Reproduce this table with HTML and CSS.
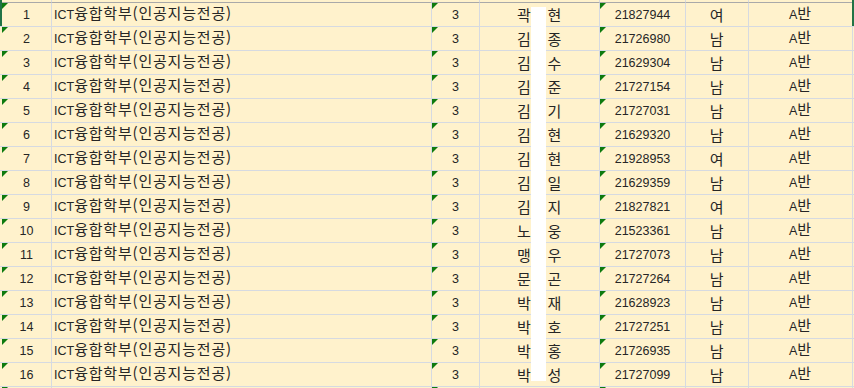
FILE: index.html
```html
<!DOCTYPE html>
<html lang="ko">
<head>
<meta charset="utf-8">
<link rel="stylesheet" href="styles.css">
</head>
<body>
<div class="sheet">
  <div class="row top">
    <div class="edge"></div><div class="c"></div><div class="c"></div><div class="c"></div><div class="c"></div><div class="c"></div><div class="c"></div><div class="c"></div><div class="rest"></div>
  </div>
  <div class="row"><div class="edge"></div><div class="c num tri">1</div><div class="c dept">ICT<span class="k">융합학부(인공지능전공)</span></div><div class="c ctr tri">3</div><div class="c ctr k">곽　현</div><div class="c ctr tri">21827944</div><div class="c ctr k">여</div><div class="c ctr">A<span class="k">반</span></div><div class="rest"></div></div>
  <div class="row"><div class="edge"></div><div class="c num tri">2</div><div class="c dept">ICT<span class="k">융합학부(인공지능전공)</span></div><div class="c ctr tri">3</div><div class="c ctr k">김　종</div><div class="c ctr tri">21726980</div><div class="c ctr k">남</div><div class="c ctr">A<span class="k">반</span></div><div class="rest"></div></div>
  <div class="row"><div class="edge"></div><div class="c num tri">3</div><div class="c dept">ICT<span class="k">융합학부(인공지능전공)</span></div><div class="c ctr tri">3</div><div class="c ctr k">김　수</div><div class="c ctr tri">21629304</div><div class="c ctr k">남</div><div class="c ctr">A<span class="k">반</span></div><div class="rest"></div></div>
  <div class="row"><div class="edge"></div><div class="c num tri">4</div><div class="c dept">ICT<span class="k">융합학부(인공지능전공)</span></div><div class="c ctr tri">3</div><div class="c ctr k">김　준</div><div class="c ctr tri">21727154</div><div class="c ctr k">남</div><div class="c ctr">A<span class="k">반</span></div><div class="rest"></div></div>
  <div class="row"><div class="edge"></div><div class="c num tri">5</div><div class="c dept">ICT<span class="k">융합학부(인공지능전공)</span></div><div class="c ctr tri">3</div><div class="c ctr k">김　기</div><div class="c ctr tri">21727031</div><div class="c ctr k">남</div><div class="c ctr">A<span class="k">반</span></div><div class="rest"></div></div>
  <div class="row"><div class="edge"></div><div class="c num tri">6</div><div class="c dept">ICT<span class="k">융합학부(인공지능전공)</span></div><div class="c ctr tri">3</div><div class="c ctr k">김　현</div><div class="c ctr tri">21629320</div><div class="c ctr k">남</div><div class="c ctr">A<span class="k">반</span></div><div class="rest"></div></div>
  <div class="row"><div class="edge"></div><div class="c num tri">7</div><div class="c dept">ICT<span class="k">융합학부(인공지능전공)</span></div><div class="c ctr tri">3</div><div class="c ctr k">김　현</div><div class="c ctr tri">21928953</div><div class="c ctr k">여</div><div class="c ctr">A<span class="k">반</span></div><div class="rest"></div></div>
  <div class="row"><div class="edge"></div><div class="c num tri">8</div><div class="c dept">ICT<span class="k">융합학부(인공지능전공)</span></div><div class="c ctr tri">3</div><div class="c ctr k">김　일</div><div class="c ctr tri">21629359</div><div class="c ctr k">남</div><div class="c ctr">A<span class="k">반</span></div><div class="rest"></div></div>
  <div class="row"><div class="edge"></div><div class="c num tri">9</div><div class="c dept">ICT<span class="k">융합학부(인공지능전공)</span></div><div class="c ctr tri">3</div><div class="c ctr k">김　지</div><div class="c ctr tri">21827821</div><div class="c ctr k">여</div><div class="c ctr">A<span class="k">반</span></div><div class="rest"></div></div>
  <div class="row"><div class="edge"></div><div class="c num tri">10</div><div class="c dept">ICT<span class="k">융합학부(인공지능전공)</span></div><div class="c ctr tri">3</div><div class="c ctr k">노　웅</div><div class="c ctr tri">21523361</div><div class="c ctr k">남</div><div class="c ctr">A<span class="k">반</span></div><div class="rest"></div></div>
  <div class="row"><div class="edge"></div><div class="c num tri">11</div><div class="c dept">ICT<span class="k">융합학부(인공지능전공)</span></div><div class="c ctr tri">3</div><div class="c ctr k">맹　우</div><div class="c ctr tri">21727073</div><div class="c ctr k">남</div><div class="c ctr">A<span class="k">반</span></div><div class="rest"></div></div>
  <div class="row"><div class="edge"></div><div class="c num tri">12</div><div class="c dept">ICT<span class="k">융합학부(인공지능전공)</span></div><div class="c ctr tri">3</div><div class="c ctr k">문　곤</div><div class="c ctr tri">21727264</div><div class="c ctr k">남</div><div class="c ctr">A<span class="k">반</span></div><div class="rest"></div></div>
  <div class="row"><div class="edge"></div><div class="c num tri">13</div><div class="c dept">ICT<span class="k">융합학부(인공지능전공)</span></div><div class="c ctr tri">3</div><div class="c ctr k">박　재</div><div class="c ctr tri">21628923</div><div class="c ctr k">남</div><div class="c ctr">A<span class="k">반</span></div><div class="rest"></div></div>
  <div class="row"><div class="edge"></div><div class="c num tri">14</div><div class="c dept">ICT<span class="k">융합학부(인공지능전공)</span></div><div class="c ctr tri">3</div><div class="c ctr k">박　호</div><div class="c ctr tri">21727251</div><div class="c ctr k">남</div><div class="c ctr">A<span class="k">반</span></div><div class="rest"></div></div>
  <div class="row"><div class="edge"></div><div class="c num tri">15</div><div class="c dept">ICT<span class="k">융합학부(인공지능전공)</span></div><div class="c ctr tri">3</div><div class="c ctr k">박　홍</div><div class="c ctr tri">21726935</div><div class="c ctr k">남</div><div class="c ctr">A<span class="k">반</span></div><div class="rest"></div></div>
  <div class="row"><div class="edge"></div><div class="c num tri">16</div><div class="c dept">ICT<span class="k">융합학부(인공지능전공)</span></div><div class="c ctr tri">3</div><div class="c ctr k">박　성</div><div class="c ctr tri">21727099</div><div class="c ctr k">남</div><div class="c ctr">A<span class="k">반</span></div><div class="rest"></div></div>
  <div class="row"><div class="edge"></div><div class="c num tri"></div><div class="c dept"></div><div class="c ctr tri"></div><div class="c ctr"></div><div class="c ctr tri"></div><div class="c ctr"></div><div class="c ctr"></div><div class="rest"></div></div>
  <div class="selection"></div>
  <div class="redact"></div>
</div>
</body>
</html>
```

FILE: styles.css
```css
html, body {
  margin: 0;
  padding: 0;
}
body {
  width: 854px;
  height: 388px;
  overflow: hidden;
  background: #fff2cc;
  font-family: "Liberation Sans", "Noto Sans CJK KR", sans-serif;
  font-size: 12.5px;
  color: #262626;
}
.sheet {
  position: relative;
  width: 854px;
}
.row {
  display: grid;
  grid-template-columns: 2px 50px 380px 48px 120px 86px 63px 104px 1px;
  height: 24px;
}
.row.top {
  height: 3px;
}
.row.top > div {
  border-bottom: 1px solid #a9a9a9;
}
.c, .edge, .rest {
  box-sizing: border-box;
  border-bottom: 1px solid #d6dae1;
}
.c {
  position: relative;
  border-right: 1px solid #d6dae1;
  padding-top: 1px;
  line-height: 22px;
  white-space: nowrap;
  overflow: hidden;
}
.num, .ctr {
  text-align: center;
}
.dept {
  padding-left: 2px;
}
.k {
  font-family: "Noto Sans CJK KR", sans-serif;
  font-size: 15px;
  letter-spacing: 0.8px;
  line-height: 0;
}
.c.k {
  line-height: 22px;
}
.tri::before {
  content: "";
  position: absolute;
  left: 0;
  top: 0;
  width: 0;
  height: 0;
  border-top: 6px solid #0e7a0e;
  border-right: 6px solid transparent;
}
.selection {
  position: absolute;
  left: 0;
  top: 0;
  width: 854px;
  height: 26px;
  box-sizing: border-box;
  border-left: 2px solid #217346;
  border-right: 2px solid #217346;
}
.redact {
  position: absolute;
  left: 531px;
  top: 7px;
  width: 15px;
  height: 374px;
  background: #ffffff;
}
```
